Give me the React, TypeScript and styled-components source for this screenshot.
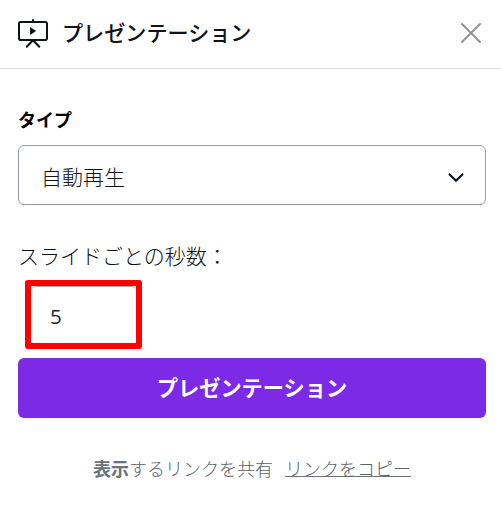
import React from "react";
import styled, { createGlobalStyle } from "styled-components";

const GlobalStyle = createGlobalStyle`
  * { box-sizing: border-box; }
  body {
    margin: 0;
    background: #fff;
    color: #0e1318;
    font-family: "Noto Sans CJK JP", "Open Sans", sans-serif;
  }
`;

const Panel = styled.main`
  width: 501px;
  height: 508px;
  overflow: hidden;
  background: #fff;
`;

const Header = styled.header`
  display: flex;
  align-items: center;
  height: 69px;
  padding: 0 19px 2px 18px;
  border-bottom: 1px solid #dce1e5;
`;

const Title = styled.h1`
  flex: 1;
  margin: -2px 0 0 14px;
  font-size: 21.1px;
  line-height: 30px;
  font-weight: 500;
`;

const IconButton = styled.button`
  display: flex;
  padding: 0;
  border: 0;
  background: none;
`;

const Body = styled.section`
  display: flex;
  flex-direction: column;
  padding: 35px 15px 0 18px;
`;

const Label = styled.label<{ $strong?: boolean }>`
  height: 30px;
  line-height: 30px;
  font-size: ${(p) => (p.$strong ? 18 : 21)}px;
  font-weight: ${(p) => (p.$strong ? 700 : 300)};
  color: ${(p) => (p.$strong ? "#000" : "#0e1318")};
`;

const Select = styled.button`
  display: flex;
  align-items: center;
  justify-content: space-between;
  height: 60px;
  margin: 11px 0 35px;
  padding: 1px 20px 0 22px;
  border: 1px solid #949a9f;
  border-radius: 6px;
  background: #fff;
  color: #0e1318;
  font: 300 21px/30px "Noto Sans CJK JP", sans-serif;
`;

const Highlight = styled.div`
  width: 117px;
  height: 69px;
  margin: 10px 0 9px 7px;
  border: 6px solid #ff0000;
  border-radius: 3px;
  background: #fff;
`;

const NumberInput = styled.input`
  display: block;
  width: 105px;
  height: 57px;
  padding: 1px 18px 0 19px;
  border: 1px solid transparent;
  border-width: 1px 0 0;
  border-top-color: #a3a8ac;
  border-radius: 5px 5px 0 0;
  outline: 0;
  background: #fff;
  color: #20252b;
  font: 400 20.5px "Open Sans", sans-serif;
`;

const PresentButton = styled.button`
  height: 60px;
  padding: 0 0 2px;
  border: 0;
  border-radius: 6px;
  background: #7d2ae7;
  color: #fff;
  font: 700 21.2px/30px "Noto Sans CJK JP", sans-serif;
`;

const Footer = styled.footer`
  display: flex;
  justify-content: center;
  gap: 12px;
  margin-top: 37px;
  font-size: 18px;
  line-height: 26px;
  font-weight: 300;
  color: #5b636a;
`;

const Strong = styled.b`
  font-weight: 700;
  color: #6b7278;
`;

const CopyLink = styled.a`
  height: 22px;
  border-bottom: 1px solid #6b7278;
`;

const PresentIcon = () => (
  <svg width="30" height="32" viewBox="0 0 30 32" fill="none" stroke="#0e1318" strokeWidth="2">
    <rect x="1" y="5" width="28" height="18" rx="1.8" />
    <path d="M15 3v2M14.3 24 8.7 29.8M15.7 24l5.6 5.8" strokeLinecap="round" />
    <path d="M12 10v8l6.2-4z" fill="#0e1318" stroke="none" />
  </svg>
);

const CloseIcon = () => (
  <svg width="22" height="22" viewBox="0 0 22 22" stroke="#8d9399" strokeWidth="2" strokeLinecap="round">
    <path d="M2 2l18 18M20 2 2 20" />
  </svg>
);

const ChevronIcon = () => (
  <svg width="18" height="14" viewBox="0 0 18 14" fill="none" stroke="#0e1318" strokeWidth="2.2" strokeLinecap="round" strokeLinejoin="round">
    <path d="M2.6 5.5 9 11.8l6.4-6.3" />
  </svg>
);

export default function App() {
  return (
    <Panel>
      <GlobalStyle />
      <Header>
        <PresentIcon />
        <Title>プレゼンテーション</Title>
        <IconButton aria-label="閉じる">
          <CloseIcon />
        </IconButton>
      </Header>
      <Body>
        <Label $strong>タイプ</Label>
        <Select>
          <span>自動再生</span>
          <ChevronIcon />
        </Select>
        <Label htmlFor="seconds">スライドごとの秒数：</Label>
        <Highlight>
          <NumberInput id="seconds" defaultValue="5" />
        </Highlight>
        <PresentButton>プレゼンテーション</PresentButton>
        <Footer>
          <span>
            <Strong>表示</Strong>するリンクを共有
          </span>
          <CopyLink>リンクをコピー</CopyLink>
        </Footer>
      </Body>
    </Panel>
  );
}
